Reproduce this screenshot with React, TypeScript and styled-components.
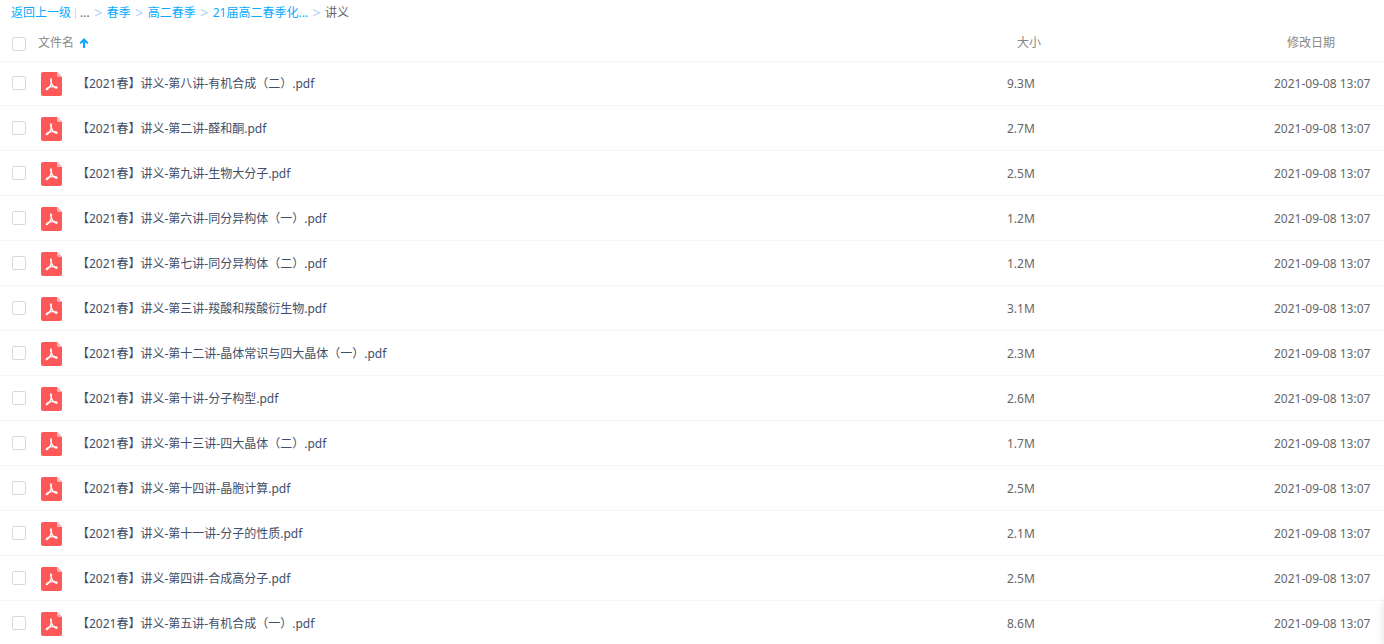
import React from "react";
import styled, { createGlobalStyle } from "styled-components";

const GlobalStyle = createGlobalStyle`
  * { box-sizing: border-box; }
  body {
    margin: 0;
    overflow: hidden;
    background: #fff;
    color: #424e67;
    font-family: "Noto Sans", "Noto Sans CJK SC", sans-serif;
    font-size: 12px;
    line-height: 20px;
  }
`;

const Breadcrumb = styled.nav`
  display: flex;
  align-items: center;
  height: 24px;
  padding: 2px 0 0 11px;
  white-space: nowrap;
  color: #666;
`;

const Crumb = styled.a`
  color: #09aaff;
  text-decoration: none;
`;

const Divider = styled.span`
  width: 1px;
  height: 11px;
  margin: 0 4px;
  background: #b4e4fb;
`;

const Separator = styled.span`
  width: 17px;
  text-align: center;
  font-size: 14px;
  color: #b0cdf8;
`;

const Table = styled.table`
  width: 100%;
  table-layout: fixed;
  border-collapse: separate;
  border-spacing: 0;
`;

const Column = styled.col<{ $width?: number }>`
  width: ${({ $width }) => ($width ? `${$width}px` : "auto")};
`;

const HeadCell = styled.th<{ $indent?: number }>`
  height: 37px;
  padding: 0 0 0 ${({ $indent = 0 }) => $indent}px;
  color: #888;
  font-weight: 400;
  text-align: left;
`;

const SelectAllCell = styled(HeadCell)`
  padding-top: 2px;
`;

const Cell = styled.td`
  height: 45px;
  padding: 0;
  border-bottom: 1px solid #f2f6fd;

  tr:first-child > & {
    box-shadow: inset 0 1px #f2f6fd;
  }
`;

const TextCell = styled(Cell)<{ $muted?: boolean }>`
  padding-top: 2px;
  color: ${({ $muted }) => ($muted ? "#666" : "#424e67")};
  white-space: nowrap;
`;

const Checkbox = styled.input`
  display: block;
  appearance: none;
  width: 14px;
  height: 14px;
  margin: 0 0 0 12px;
  border: 1px solid #d3dae3;
  border-radius: 2px;
  background: #fff;

  &:checked {
    border-color: #09aaff;
    background: #09aaff;
  }
`;

const SortButton = styled.button`
  display: flex;
  align-items: center;
  gap: 5px;
  padding: 0;
  border: 0;
  background: none;
  color: inherit;
  font: inherit;
`;

const FileLabel = styled.label`
  display: flex;
  align-items: center;
  gap: 15px;
  padding-left: 3px;
`;

const FloatingPanel = styled.aside`
  position: fixed;
  right: -60px;
  bottom: -6px;
  width: 60px;
  height: 50px;
  border-radius: 4px;
  box-shadow: 0 0 10px rgba(0, 0, 0, 0.12);
`;

const SortArrow = () => (
  <svg width="10" height="10" viewBox="0 0 10 10" aria-hidden="true">
    <path d="M5 0L9.500 4.500 8.300 6 6 4.200V10H4V4.200L1.700 6 .5 4.500Z" fill="#09aaff" />
  </svg>
);

const PdfIcon = () => (
  <svg width="21" height="24" viewBox="0 0 21 24" aria-hidden="true">
    <path d="M2 0H16l5 5v17a2 2 0 0 1-2 2H2a2 2 0 0 1-2-2V2A2 2 0 0 1 2 0Z" fill="#ff5858" />
    <path d="M16 0l5 5h-3.500A1.500 1.500 0 0 1 16 3.500Z" fill="#ffb4b4" />
    <path
      d="M10 6.800c-1 .3-.3 2.300.2 4 .1 1.500-1.600 4.500-3.300 6-1 .9-2 1.300-1.600.4.500-1.200 3.700-2.300 6-2.500 1.800-.2 4.600.1 4.800.9.200 1-1.800.6-3-.6-1.200-1-2.200-2.400-2.600-4-.3-1.500.2-4-.5-4.200Z"
      fill="none"
      stroke="#fff"
      strokeWidth="1.200"
      strokeLinejoin="round"
    />
  </svg>
);

const crumbs = ["春季", "高二春季", "21届高二春季化..."];

const files = [
  { name: "【2021春】讲义-第八讲-有机合成（二）.pdf", size: "9.3M" },
  { name: "【2021春】讲义-第二讲-醛和酮.pdf", size: "2.7M" },
  { name: "【2021春】讲义-第九讲-生物大分子.pdf", size: "2.5M" },
  { name: "【2021春】讲义-第六讲-同分异构体（一）.pdf", size: "1.2M" },
  { name: "【2021春】讲义-第七讲-同分异构体（二）.pdf", size: "1.2M" },
  { name: "【2021春】讲义-第三讲-羧酸和羧酸衍生物.pdf", size: "3.1M" },
  { name: "【2021春】讲义-第十二讲-晶体常识与四大晶体（一）.pdf", size: "2.3M" },
  { name: "【2021春】讲义-第十讲-分子构型.pdf", size: "2.6M" },
  { name: "【2021春】讲义-第十三讲-四大晶体（二）.pdf", size: "1.7M" },
  { name: "【2021春】讲义-第十四讲-晶胞计算.pdf", size: "2.5M" },
  { name: "【2021春】讲义-第十一讲-分子的性质.pdf", size: "2.1M" },
  { name: "【2021春】讲义-第四讲-合成高分子.pdf", size: "2.5M" },
  { name: "【2021春】讲义-第五讲-有机合成（一）.pdf", size: "8.6M" },
];

export default function App() {
  return (
    <>
      <GlobalStyle />
      <Breadcrumb>
        <Crumb href="#back">返回上一级</Crumb>
        <Divider />
        <span>...</span>
        {crumbs.map((crumb) => (
          <React.Fragment key={crumb}>
            <Separator>&gt;</Separator>
            <Crumb href="#folder">{crumb}</Crumb>
          </React.Fragment>
        ))}
        <Separator>&gt;</Separator>
        <span>讲义</span>
      </Breadcrumb>
      <Table>
        <colgroup>
          <Column $width={38} />
          <Column />
          <Column $width={267} />
          <Column $width={110} />
        </colgroup>
        <thead>
          <tr>
            <SelectAllCell>
              <Checkbox type="checkbox" aria-label="全选" />
            </SelectAllCell>
            <HeadCell>
              <SortButton type="button">
                文件名
                <SortArrow />
              </SortButton>
            </HeadCell>
            <HeadCell $indent={10}>大小</HeadCell>
            <HeadCell $indent={13}>修改日期</HeadCell>
          </tr>
        </thead>
        <tbody>
          {files.map((file, index) => (
            <tr key={file.name}>
              <Cell>
                <Checkbox type="checkbox" id={`file-${index}`} />
              </Cell>
              <TextCell>
                <FileLabel htmlFor={`file-${index}`}>
                  <PdfIcon />
                  {file.name}
                </FileLabel>
              </TextCell>
              <TextCell $muted>{file.size}</TextCell>
              <TextCell $muted>2021-09-08 13:07</TextCell>
            </tr>
          ))}
        </tbody>
      </Table>
      <FloatingPanel />
    </>
  );
}
